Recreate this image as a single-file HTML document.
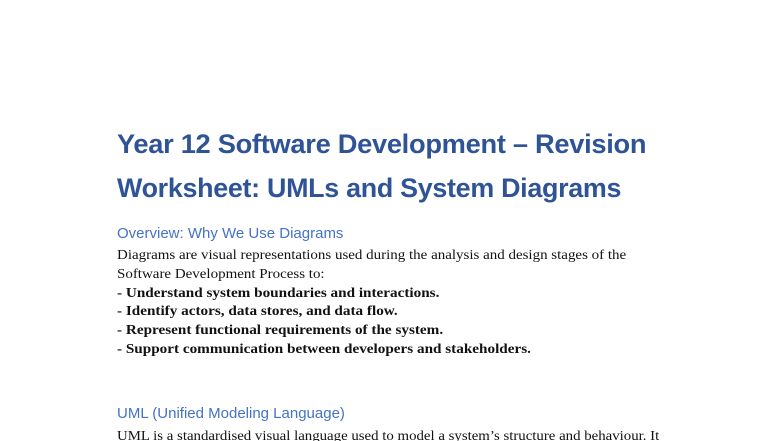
<!DOCTYPE html>
<html><head><meta charset="utf-8"><style>
html,body{margin:0;padding:0;background:#fff;width:784px;height:441px;overflow:hidden;position:relative}
.l{position:absolute;left:117px;white-space:nowrap;transform-origin:0 50%}
.t{font-family:"Liberation Sans",sans-serif;font-weight:bold;font-size:27px;color:#2f5496;height:30px;line-height:30px;letter-spacing:-0.3px;transform:scaleX(1.01)}
.h{font-family:"Liberation Sans",sans-serif;font-size:15px;color:#4472c4;height:20px;line-height:20px;transform:scaleX(1.0)}
.b{font-family:"Liberation Serif",serif;font-size:14px;color:#111;height:20px;line-height:20px;transform:scaleX(1.07)}
.bb{font-weight:bold;transform:scaleX(1.085)}
</style></head><body>
<div class="l t" style="top:129px">Year 12 Software Development – Revision</div>
<div class="l t" style="top:173px;transform:scaleX(0.995)">Worksheet: UMLs and System Diagrams</div>
<div class="l h" style="top:224px">Overview: Why We Use Diagrams</div>
<div class="l b" style="top:246px">Diagrams are visual representations used during the analysis and design stages of the</div>
<div class="l b" style="top:265px">Software Development Process to:</div>
<div class="l b bb" style="top:284px">- Understand system boundaries and interactions.</div>
<div class="l b bb" style="top:302px">- Identify actors, data stores, and data flow.</div>
<div class="l b bb" style="top:321px">- Represent functional requirements of the system.</div>
<div class="l b bb" style="top:340px">- Support communication between developers and stakeholders.</div>
<div class="l h" style="top:404px">UML (Unified Modeling Language)</div>
<div class="l b" style="top:427px;transform:scaleX(1.06)">UML is a standardised visual language used to model a system’s structure and behaviour. It</div>
</body></html>
